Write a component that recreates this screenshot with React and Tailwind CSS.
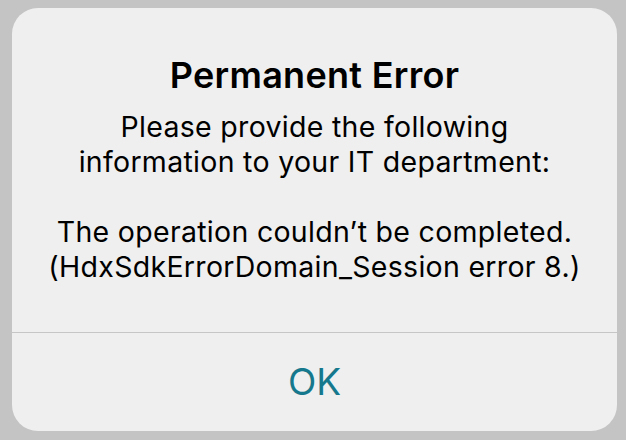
import React from "react";

function App() {
  return (
    <div className="w-[626px] h-[440px] bg-[#c4c4c4] pt-[8px] pl-[12px] font-['Inter','Liberation_Sans',sans-serif]">
      <div className="w-[605px] h-[423px] bg-[#efefef] rounded-[26px] flex flex-col overflow-hidden">
        {/* Message */}
        <div className="h-[324px] flex flex-col items-center pt-[47px] text-black text-center">
          <h1 className="text-[36px] leading-[40px] font-semibold tracking-[0.3px]">Permanent Error</h1>
          <p className="mt-[14px] text-[28.5px] leading-[35px] tracking-[0.3px]">
            Please provide the following
            <br />
            information to your IT department:
            <br />
            <br />
            The operation couldn’t be completed.
            <br />
            (HdxSdkErrorDomain_Session error 8.)
          </p>
        </div>
        <div className="h-px bg-[#c6c6c6]" />
        <button className="flex-1 flex items-center justify-center text-[37px] text-[#15788c]">
          OK
        </button>
      </div>
    </div>
  );
}

export default App;
